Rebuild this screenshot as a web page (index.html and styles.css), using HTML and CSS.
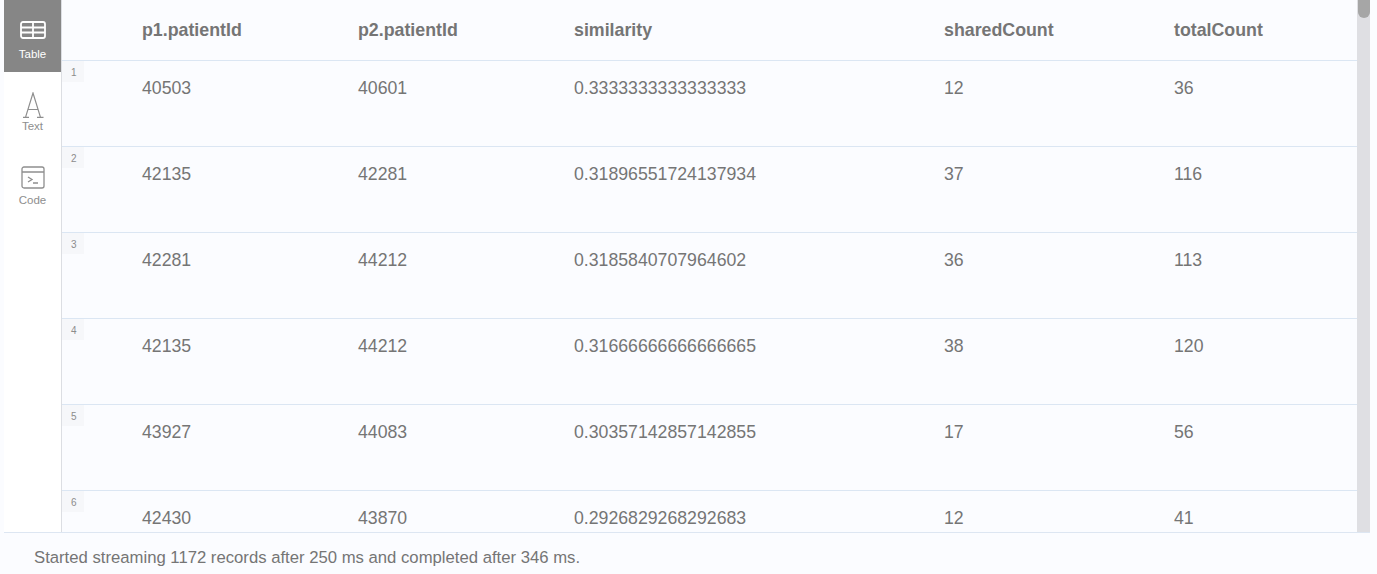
FILE: index.html
```html
<!DOCTYPE html>
<html lang="en">
<head>
    <meta charset="UTF-8">
    <title>Query result</title>
    <link rel="stylesheet" href="styles.css">
</head>
<body>
    <div class="frame">
        <div class="result">
            <nav class="tabs">
                <div class="tab tab-table active">
                    <svg width="26" height="18" viewBox="0 0 26 18" fill="none" stroke="currentColor" stroke-width="1.800">
                        <rect x="1" y="1" width="24" height="16" rx="2"/>
                        <path d="M1 6.500h24M1 11.500h24M13 1v16"/>
                    </svg>
                    <span>Table</span>
                </div>
                <div class="tab tab-text">
                    <svg width="22" height="26" viewBox="0 0 22 26" fill="none" stroke="currentColor" stroke-width="1.200">
                        <path d="M1 25.400h6M15 25.400h6.500M3.500 25.400L11 1l7.500 24.400M6 17.500h10"/>
                    </svg>
                    <span>Text</span>
                </div>
                <div class="tab tab-code">
                    <svg width="24" height="23" viewBox="0 0 24 23" fill="none" stroke="currentColor" stroke-width="1.300">
                        <rect x="1" y="1" width="22" height="21" rx="2"/>
                        <path d="M1 6h22M7 11l4 2.500L7 16M12 17h5"/>
                    </svg>
                    <span>Code</span>
                </div>
            </nav>
            <div class="table-wrap">
                <div class="table-scroll">
                    <table class="records">
                        <thead>
                            <tr>
                                <th>p1.patientId</th>
                                <th>p2.patientId</th>
                                <th>similarity</th>
                                <th>sharedCount</th>
                                <th>totalCount</th>
                            </tr>
                        </thead>
                        <tbody>
                            <tr><td><span class="num">1</span>40503</td><td>40601</td><td>0.3333333333333333</td><td>12</td><td>36</td></tr>
                            <tr><td><span class="num">2</span>42135</td><td>42281</td><td>0.31896551724137934</td><td>37</td><td>116</td></tr>
                            <tr><td><span class="num">3</span>42281</td><td>44212</td><td>0.3185840707964602</td><td>36</td><td>113</td></tr>
                            <tr><td><span class="num">4</span>42135</td><td>44212</td><td>0.31666666666666665</td><td>38</td><td>120</td></tr>
                            <tr><td><span class="num">5</span>43927</td><td>44083</td><td>0.30357142857142855</td><td>17</td><td>56</td></tr>
                            <tr><td><span class="num">6</span>42430</td><td>43870</td><td>0.2926829268292683</td><td>12</td><td>41</td></tr>
                        </tbody>
                    </table>
                </div>
                <div class="scrollbar"><div class="thumb"></div></div>
            </div>
        </div>
        <div class="status">Started streaming 1172 records after 250 ms and completed after 346 ms.</div>
    </div>
</body>
</html>
```

FILE: styles.css
```css
body {
    margin: 0;
    height: 574px;
    overflow: hidden;
    background-color: #fbfcff;
    color: #757575;
    font-family: "Liberation Sans", Arial, sans-serif;
}

.frame {
    height: 574px;
    display: flex;
    flex-direction: column;
}

.result {
    height: 533px;
    margin-left: 4px;
    margin-right: 7px;
    display: flex;
    border-bottom: 1px solid #dde6f2;
    box-sizing: border-box;
}

/* left tabs */
.tabs {
    width: 58px;
    flex-shrink: 0;
    box-sizing: border-box;
    background-color: #fff;
    border-right: 1px solid #dcdee3;
}

.tab {
    height: 72px;
    box-sizing: border-box;
    display: flex;
    flex-direction: column;
    align-items: center;
    font-size: 11.500px;
    line-height: 13px;
    color: #8e8e8e;
}

.tab svg {
    display: block;
}

.tab-table {
    padding-top: 21px;
    gap: 9px;
}

.tab-text {
    padding-top: 20px;
    gap: 2px;
}

.tab-code {
    padding-top: 22px;
    gap: 5px;
}

.tab.active {
    background-color: #868686;
    color: #fff;
}

/* table */
.table-wrap {
    flex: 1;
    min-width: 0;
    display: flex;
    overflow: hidden;
}

.table-scroll {
    flex: 1;
    min-width: 0;
    overflow: hidden;
}

.records {
    width: 100%;
    table-layout: fixed;
    border-collapse: collapse;
    font-size: 17.700px;
}

.records th:nth-child(1) { width: 295px; }
.records th:nth-child(2) { width: 216px; }
.records th:nth-child(3) { width: 370px; }
.records th:nth-child(4) { width: 230px; }

.records th {
    height: 60px;
    padding: 2px 0 0 1px;
    box-sizing: border-box;
    text-align: left;
    font-size: 17.800px;
    font-weight: bold;
    color: #757575;
}

.records th:first-child,
.records td:first-child {
    padding-left: 80px;
}

.records td {
    position: relative;
    height: 86px;
    padding-bottom: 30px;
    box-sizing: border-box;
    border-top: 1px solid #dbe6f3;
}

.num {
    position: absolute;
    left: 0;
    top: 0;
    width: 22px;
    height: 21px;
    padding: 6px 0 0 9px;
    box-sizing: border-box;
    background-color: #f6f7fa;
    font-size: 10px;
    color: #8c8c8c;
}

.scrollbar {
    width: 13px;
    flex-shrink: 0;
    background-color: #dfdfe3;
}

.thumb {
    width: 12px;
    height: 18px;
    margin-left: 1px;
    background-color: #a6a6a6;
    border-radius: 0 0 6px 6px;
}

.status {
    padding: 15px 0 0 34px;
    font-size: 16.700px;
    color: #757575;
}
```
